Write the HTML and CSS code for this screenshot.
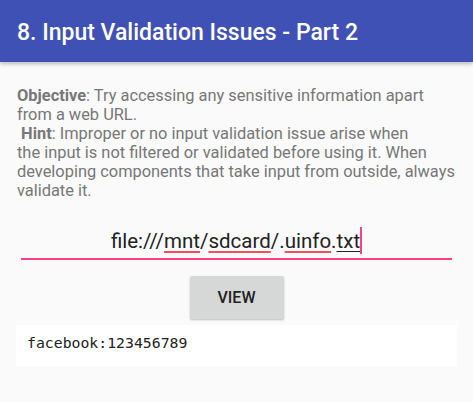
FILE: index.html
```html
<!DOCTYPE html>
<html>
<head>
<meta charset="utf-8">
<link rel="stylesheet" href="styles.css">
</head>
<body>
<header class="appbar"><h1 class="title">8. Input Validation Issues - Part 2</h1></header>
<main class="content">
  <p class="desc"><b>Objective</b>: Try accessing any sensitive information apart<br>from a web URL.<br>&nbsp;<b>Hint</b>: Improper or no input validation issue arise when<br>the input is not filtered or validated before using it. When<br>developing components that take input from outside, always<br>validate it.</p>
  <div class="field"><span class="value">file:///<span class="spell">mnt</span>/<span class="spell">sdcard</span>/.<span class="spell">uinfo</span>.<span class="compose">txt</span><span class="caret"></span></span></div>
  <div class="actions"><button class="btn">VIEW</button></div>
  <div class="result">facebook:123456789</div>
</main>
</body>
</html>
```
FILE: styles.css
```css
html, body {
  margin: 0;
  padding: 0;
  background: #fafafa;
}
body {
  width: 473px;
  height: 402px;
  overflow: hidden;
  font-family: Roboto, "Noto Sans", sans-serif;
}
.appbar {
  height: 62px;
  background: #3f51b5;
  box-shadow: 0 2px 4px rgba(0, 0, 0, 0.25);
  display: flex;
  align-items: center;
  padding-left: 17px;
  position: relative;
}
.title {
  margin: 0;
  color: #fff;
  font-size: 23px;
  font-weight: 500;
  padding-top: 2px;
  white-space: nowrap;
}
.content {
  padding: 24px 16px 0 16px;
}
.desc {
  margin: 0 0 0 1px;
  font-size: 16.4px;
  line-height: 19px;
  color: #777;
  white-space: nowrap;
}
.desc b {
  font-weight: 700;
}
.field {
  margin: 27px 5px 0 5px;
  text-align: center;
  border-bottom: 2px solid #ff4081;
  padding-bottom: 1px;
  line-height: 28px;
}
.value {
  font-size: 20.5px;
  color: #222;
}
.spell {
  text-decoration: underline;
  text-decoration-color: #f2505e;
  text-decoration-thickness: 2px;
  text-underline-offset: 3px;
}
.compose {
  text-decoration: underline;
  text-decoration-color: #222;
  text-decoration-thickness: 1px;
  text-underline-offset: 3px;
}
.caret {
  display: inline-block;
  width: 2px;
  height: 27px;
  background: #ff4081;
  vertical-align: -6px;
}
.actions {
  display: flex;
  justify-content: center;
  margin-top: 16px;
}
.btn {
  width: 94px;
  height: 43px;
  border: none;
  border-radius: 2px;
  background: #d6d7d7;
  box-shadow: 0 1px 2px rgba(0, 0, 0, 0.25);
  font-family: Roboto, sans-serif;
  font-weight: 500;
  font-size: 16px;
  color: #222;
  padding: 0;
}
.result {
  margin-top: 6px;
  background: #fff;
  height: 41px;
  box-sizing: border-box;
  padding: 8px 11px;
  font-family: "DejaVu Sans Mono", monospace;
  font-size: 14.8px;
  color: #222;
  line-height: 20px;
}
```
